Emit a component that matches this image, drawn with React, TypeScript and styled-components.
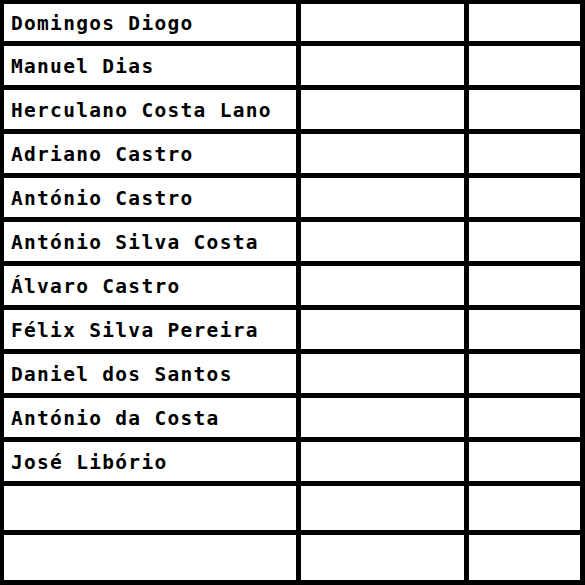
import React, { FC } from 'react';
import styled, { createGlobalStyle } from 'styled-components';

const GlobalStyle = createGlobalStyle`
  html, body {
    margin: 0;
    padding: 0;
    background: #fff;
  }
`;

const Sheet = styled.div`
  display: grid;
  grid-template-columns: 292px 163px 1fr;
  grid-template-rows: 37px repeat(10, 39px) 44px 45px;
  gap: 5px;
  width: 585px;
  height: 585px;
  box-sizing: border-box;
  padding: 4px 5px 5px 4px;
  background: #000;
`;

const Cell = styled.div<{ $name?: boolean }>`
  display: flex;
  align-items: center;
  background: #fff;
  padding: 1px 0 0 ${({ $name }) => ($name ? '7px' : '0')};
  font-family: 'DejaVu Sans Mono', 'Liberation Mono', monospace;
  font-weight: bold;
  font-size: 19.5px;
  letter-spacing: 1.3px;
  color: #000;
  white-space: nowrap;
  overflow: hidden;
`;

const names = [
  'Domingos Diogo',
  'Manuel Dias',
  'Herculano Costa Lano',
  'Adriano Castro',
  'António Castro',
  'António Silva Costa',
  'Álvaro Castro',
  'Félix Silva Pereira',
  'Daniel dos Santos',
  'António da Costa',
  'José Libório',
  '',
  '',
];

const App: FC = () => {
  return (
    <>
      <GlobalStyle />
      <Sheet>
        {names.map((name, i) => (
          <React.Fragment key={i}>
            <Cell $name>{name}</Cell>
            <Cell />
            <Cell />
          </React.Fragment>
        ))}
      </Sheet>
    </>
  );
};

export default App;
